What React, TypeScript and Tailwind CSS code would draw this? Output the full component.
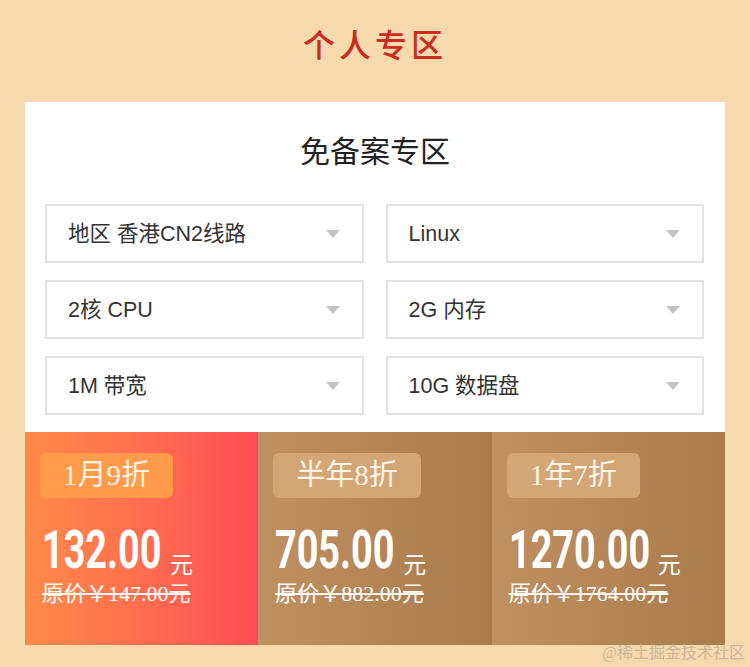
import { ReactNode } from 'react';

const sans = "font-['Helvetica_Neue','Liberation_Sans','Noto_Sans_CJK_SC',sans-serif]";
const serif = "font-['Liberation_Serif','Noto_Sans_CJK_SC',serif]";

const selects = ['地区 香港CN2线路', 'Linux', '2核 CPU', '2G 内存', '1M 带宽', '10G 数据盘'];

const plans = [
  {
    tag: '1月9折',
    price: '132.00',
    old: '147.00',
    bg: 'bg-gradient-to-r from-[#ff8a48] to-[#ff4a55]',
    tagBg: 'bg-[#ff9b4a]',
    numW: 'w-[116px]',
  },
  {
    tag: '半年8折',
    price: '705.00',
    old: '882.00',
    bg: 'bg-gradient-to-r from-[#bf9162] to-[#a97a4b]',
    tagBg: 'bg-[#d3a678]',
    numW: 'w-[116px]',
  },
  {
    tag: '1年7折',
    price: '1270.00',
    old: '1764.00',
    bg: 'bg-gradient-to-r from-[#bf9162] to-[#a97a4b]',
    tagBg: 'bg-[#d3a678]',
    numW: 'w-[137px]',
  },
];

function Select({ children }: { children: ReactNode }) {
  return (
    <div className="flex h-[59px] items-center justify-between border-2 border-[#e2e2e2] pl-[21px] pr-[22px]">
      <span className="pt-[2px] text-[21.5px] text-[#333]">{children}</span>
      <svg width="14" height="8" viewBox="0 0 14 8">
        <path d="M0 0h14L7 8z" fill="#c4c4c4" />
      </svg>
    </div>
  );
}

function PlanCard({ plan }: { plan: (typeof plans)[number] }) {
  return (
    <div className={`flex flex-col px-[15px] pt-[21px] ${plan.bg}`}>
      <div
        className={`self-start rounded-[6px] px-[23px] h-[45px] flex items-center text-[29px] text-[#fff3e4] ${serif} ${plan.tagBg}`}
      >
        {plan.tag}
      </div>
      <div className="mt-[26px] flex items-end pl-[2px] text-white">
        <div className={`${plan.numW} h-[52px] overflow-visible`}>
          <span className="inline-block origin-left scale-x-[0.7] font-['Roboto',sans-serif] text-[54px] font-bold leading-[52px]">
            {plan.price}
          </span>
        </div>
        <span className="ml-[12px] mb-[-1px] text-[23px] leading-none">元</span>
      </div>
      <div className={`mt-[5px] pl-[2px] text-[22px] leading-[26px] text-white line-through ${serif}`}>
        原价￥{plan.old}元
      </div>
    </div>
  );
}

export default function App() {
  return (
    <div className={`relative h-[667px] w-[750px] overflow-hidden bg-[#f6d9ac] ${sans}`}>
      <div className="flex h-[102px] items-center justify-center pb-[10px]">
        <h1 className="text-[32px] font-medium tracking-[4px] text-[#cc2b20]">个人专区</h1>
      </div>
      <div className="mx-[25px] bg-white">
        <div className="pt-[32px] pb-[34px] text-center text-[30px] leading-[36px] text-[#222]">免备案专区</div>
        <div className="grid grid-cols-2 gap-x-[22px] gap-y-[17px] pl-[20px] pr-[21px] pb-[17px]">
          {selects.map((s) => (
            <Select key={s}>{s}</Select>
          ))}
        </div>
        <div className="grid h-[213px] grid-cols-3">
          {plans.map((p) => (
            <PlanCard key={p.tag} plan={p} />
          ))}
        </div>
      </div>
      <div className={`absolute bottom-[2px] right-[5px] text-[16px] text-[#c9b89c] ${serif}`}>@稀土掘金技术社区</div>
    </div>
  );
}
